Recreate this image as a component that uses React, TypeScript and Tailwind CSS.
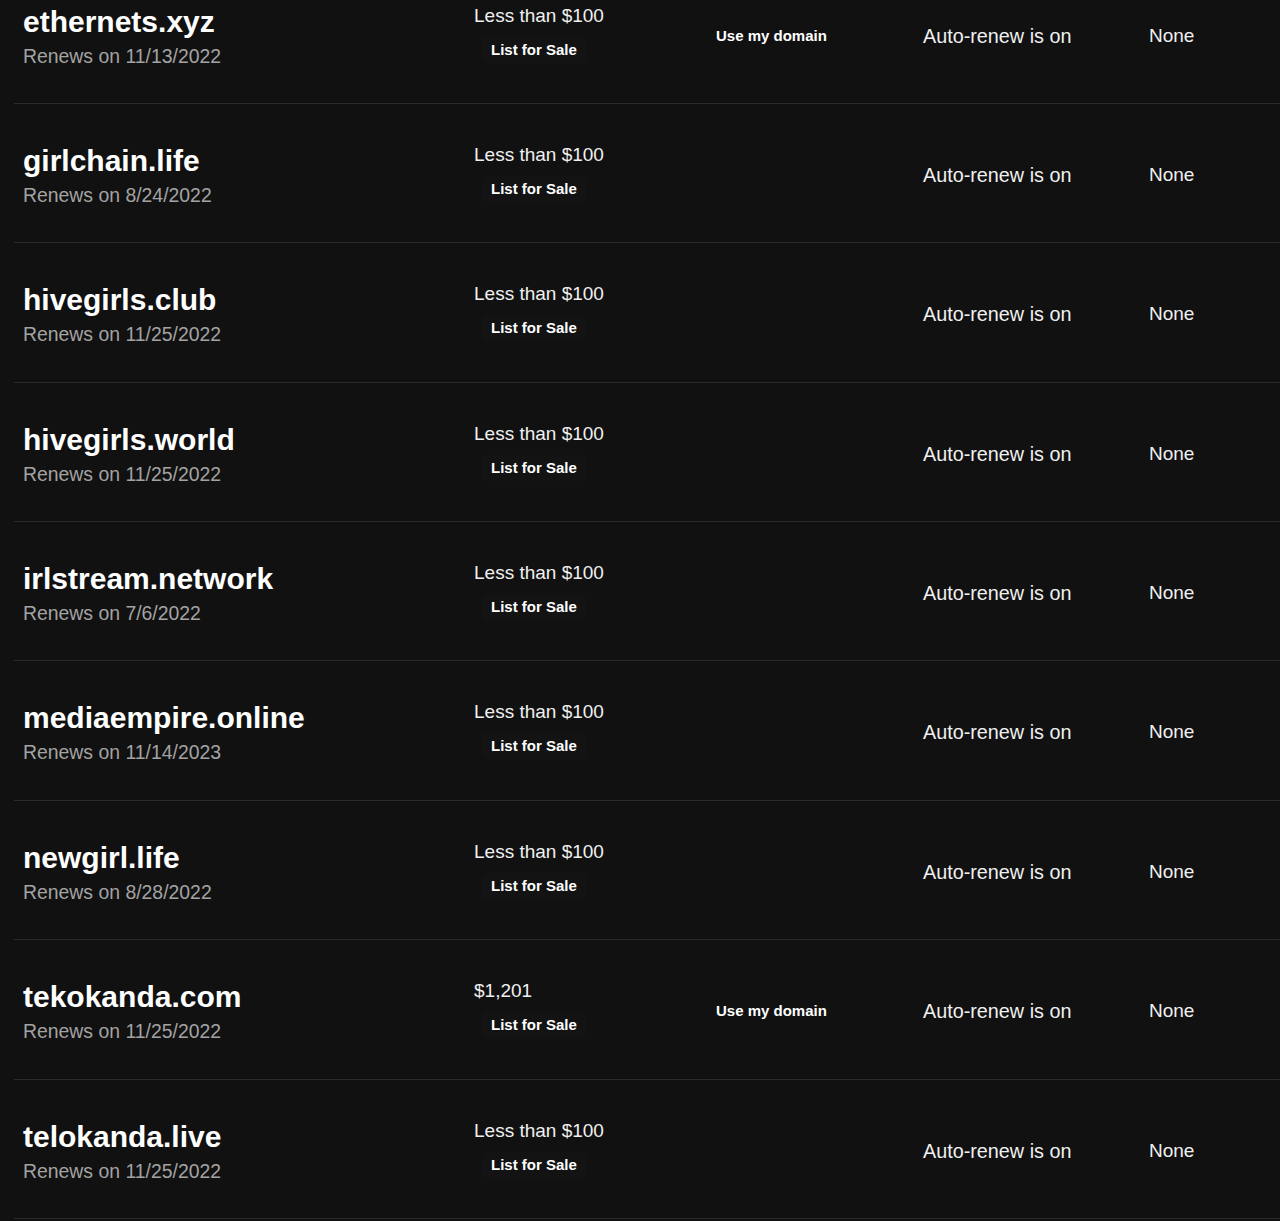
const domains = [
  { name: "ethernets.xyz", renews: "11/13/2022", price: "Less than $100", useDomain: true },
  { name: "girlchain.life", renews: "8/24/2022", price: "Less than $100" },
  { name: "hivegirls.club", renews: "11/25/2022", price: "Less than $100" },
  { name: "hivegirls.world", renews: "11/25/2022", price: "Less than $100" },
  { name: "irlstream.network", renews: "7/6/2022", price: "Less than $100" },
  { name: "mediaempire.online", renews: "11/14/2023", price: "Less than $100" },
  { name: "newgirl.life", renews: "8/28/2022", price: "Less than $100" },
  { name: "tekokanda.com", renews: "11/25/2022", price: "$1,201", useDomain: true },
  { name: "telokanda.live", renews: "11/25/2022", price: "Less than $100" },
];

type DomainRowProps = {
  name: string;
  renews: string;
  price: string;
  useDomain?: boolean;
};

function DomainRow({ name, renews, price, useDomain }: DomainRowProps) {
  return (
    <div className="flex h-[139.375px] items-start border-b border-[#2a2a2a]">
      <div className="w-[460px] shrink-0 pl-[9px] pt-[40px]">
        <div className="text-[30px] font-bold leading-[34px] text-white">{name}</div>
        <div className="mt-[5px] text-[19.4px] leading-[24px] text-[#a3a3a3]">Renews on {renews}</div>
      </div>
      <div className="w-[233px] shrink-0 pt-[39px]">
        <div className="text-[19px] leading-[24px] text-[#f0f0f0]">{price}</div>
        <button
          type="button"
          className="ml-[8px] mt-[9px] rounded bg-[#131313] px-[9px] text-[15px] font-bold leading-[26px] text-white"
        >
          List for Sale
        </button>
      </div>
      <div className="w-[216px] shrink-0 pt-[58px]">
        {useDomain ? (
          <button
            type="button"
            className="rounded px-[9px] text-[15px] font-bold leading-[26px] text-white"
          >
            Use my domain
          </button>
        ) : null}
      </div>
      <div className="w-[226px] shrink-0 pt-[59px] text-[19.8px] leading-[24px] text-[#f0f0f0]">
        Auto-renew is on
      </div>
      <div className="flex-1 pt-[59px] text-[19px] leading-[24px] text-[#f0f0f0]">None</div>
    </div>
  );
}

export default function App() {
  return (
    <div className="h-[1221px] overflow-hidden bg-[#111111] font-['Liberation_Sans',Arial,sans-serif]">
      <div className="-mt-[35.4px] ml-[14px]">
        {domains.map((d) => (
          <DomainRow key={d.name} {...d} />
        ))}
      </div>
    </div>
  );
}
